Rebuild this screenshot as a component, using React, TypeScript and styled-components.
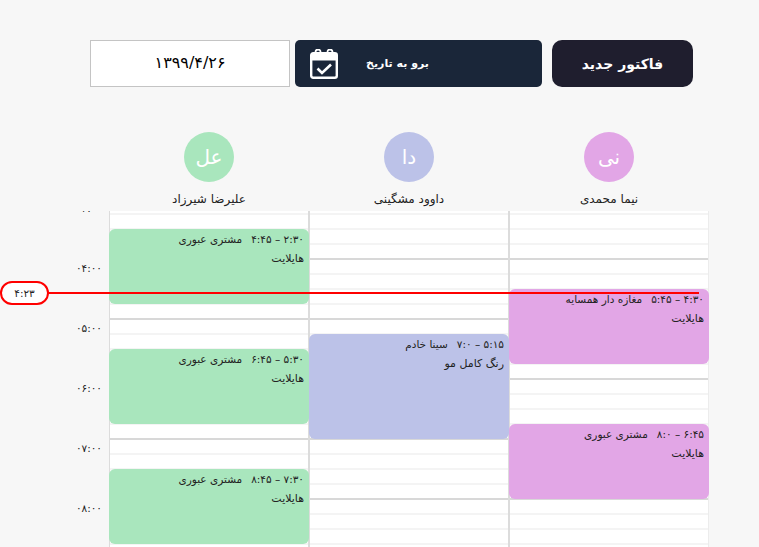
import React from 'react';
import styled, { createGlobalStyle } from 'styled-components';

const Global = createGlobalStyle`
  html, body { margin: 0; padding: 0; height: 100%; background: #f7f7f7; overflow: hidden; }
  body { font-family: "DejaVu Sans", sans-serif; }
`;

const Page = styled.div`
  position: relative;
  width: 759px;
  height: 547px;
  overflow: hidden;
  direction: rtl;
`;

const Toolbar = styled.div`
  display: flex;
  align-items: stretch;
  height: 47px;
  padding: 40px 66px 0 0;
`;

const NewButton = styled.button`
  width: 141px;
  border: 0;
  border-radius: 10px;
  background: #1f1e2e;
  color: #fff;
  font: bold 14px "DejaVu Sans", sans-serif;
`;

const DateButton = styled.button`
  display: flex;
  align-items: center;
  justify-content: space-between;
  width: 247px;
  margin-right: 10px;
  padding: 0 113px 0 15px;
  border: 0;
  border-radius: 5px;
  background: #1a2639;
  color: #fff;
  font: bold 11px "DejaVu Sans", sans-serif;
`;

const DateInput = styled.div`
  display: flex;
  align-items: center;
  justify-content: center;
  box-sizing: border-box;
  width: 200px;
  margin-right: 5px;
  padding-bottom: 2px;
  border: 1px solid #c4c4c4;
  background: #fff;
  color: #000;
  font-size: 16px;
`;

const Heads = styled.div`
  display: flex;
  margin: 45px 50px 0 0;
  height: 79px;
`;

const Head = styled.div`
  display: flex;
  flex-direction: column;
  align-items: center;
  width: 200px;
`;

const Avatar = styled.div<{ $color: string }>`
  display: flex;
  align-items: center;
  justify-content: center;
  width: 50px;
  height: 50px;
  border-radius: 50%;
  background: ${p => p.$color};
  color: #fff;
  font-size: 20px;
`;

const Name = styled.div`
  margin-top: 8px;
  color: #222;
  font-size: 12px;
  line-height: 18px;
`;

const Board = styled.div`
  display: flex;
  height: 336px;
  margin-right: 50px;
  overflow: hidden;
`;

const Column = styled.div`
  position: relative;
  box-sizing: border-box;
  width: 200px;
  margin-top: -11px;
  background: #fff;
  border-left: 1px solid #dcdcdc;
  border-right: 1px solid #dcdcdc;
  &:first-child { border-right-color: #ececec; }
`;

const Slot = styled.div<{ $hour: boolean }>`
  box-sizing: border-box;
  height: 15px;
  border-bottom: 2px solid ${p => (p.$hour ? '#d8d8d8' : '#f4f4f4')};
`;

const Event = styled.div<{ $color: string; $top: number; $height: number }>`
  position: absolute;
  top: ${p => p.$top}px;
  left: -1px;
  right: -1px;
  height: ${p => p.$height}px;
  box-sizing: border-box;
  padding: 0 5px;
  border-radius: 6px;
  background: ${p => p.$color};
  color: #222;
  font-size: 10.5px;
`;

const EventHead = styled.div`
  display: flex;
  gap: 9px;
  height: 20px;
  line-height: 20px;
`;

const EventNote = styled.div`
  font-size: 11px;
  line-height: 20px;
`;

const Axis = styled.div`
  width: 109px;
  margin-top: -13px;
`;

const AxisLabel = styled.div`
  box-sizing: border-box;
  height: 60px;
  padding: 3px 7px 0 0;
  direction: ltr;
  text-align: right;
  color: #222;
  font-size: 10.5px;
  line-height: 14px;
`;

const NowLine = styled.div`
  position: absolute;
  top: 292px;
  left: 47px;
  width: 652px;
  height: 2px;
  background: #f00;
`;

const NowPill = styled.div`
  position: absolute;
  top: 281px;
  left: 0;
  display: flex;
  align-items: center;
  justify-content: center;
  box-sizing: border-box;
  width: 49px;
  height: 24px;
  border: 2px solid #f00;
  border-radius: 12px;
  background: #fff;
  color: #222;
  font-size: 10.5px;
`;

const CalendarIcon = () => (
  <svg width="28" height="30" viewBox="0 0 28 30" fill="none">
    <rect x="1.2" y="4.2" width="25.6" height="24.6" rx="2" stroke="#fff" strokeWidth="2.4" />
    <path d="M1 5h26v6.5H1z" fill="#fff" />
    <path d="M5.5 5V3a2.5 2.5 0 0 1 5 0v2M17.5 5V3a2.5 2.5 0 0 1 5 0v2" stroke="#fff" strokeWidth="1.8" />
    <path d="M7.5 19.5l4.5 4.5L21 15.5" stroke="#fff" strokeWidth="2.6" />
  </svg>
);

type Booking = { top: number; height: number; time: string; who: string; what: string };
type Staff = { name: string; short: string; color: string; bookings: Booking[] };

const staff: Staff[] = [
  {
    name: 'نیما محمدی', short: 'نی', color: '#e2a6e6',
    bookings: [
      { top: 88.5, height: 75, time: '۴:۳۰ – ۵:۴۵', who: 'مغازه دار همسایه', what: 'هایلایت' },
      { top: 223.5, height: 75, time: '۶:۴۵ – ۸:۰', who: 'مشتری عبوری', what: 'هایلایت' },
    ],
  },
  {
    name: 'داوود مشگینی', short: 'دا', color: '#bcc2e8',
    bookings: [{ top: 133.5, height: 105, time: '۵:۱۵ – ۷:۰', who: 'سینا خادم', what: 'رنگ کامل مو' }],
  },
  {
    name: 'علیرضا شیرزاد', short: 'عل', color: '#a9e6bd',
    bookings: [
      { top: 28.5, height: 75, time: '۲:۳۰ – ۴:۴۵', who: 'مشتری عبوری', what: 'هایلایت' },
      { top: 148.5, height: 75, time: '۵:۳۰ – ۶:۴۵', who: 'مشتری عبوری', what: 'هایلایت' },
      { top: 268.5, height: 75, time: '۷:۳۰ – ۸:۴۵', who: 'مشتری عبوری', what: 'هایلایت' },
    ],
  },
];

const hours = ['۰۳', '۰۴', '۰۵', '۰۶', '۰۷', '۰۸'];
const slots = Array.from({ length: 24 }, (_, i) => i);

export default function App() {
  return (
    <Page>
      <Global />
      <Toolbar>
        <NewButton>فاکتور جدید</NewButton>
        <DateButton>
          <span>برو به تاریخ</span>
          <CalendarIcon />
        </DateButton>
        <DateInput>۱۳۹۹/۴/۲۶</DateInput>
      </Toolbar>
      <Heads>
        {staff.map(s => (
          <Head key={s.name}>
            <Avatar $color={s.color}>{s.short}</Avatar>
            <Name>{s.name}</Name>
          </Head>
        ))}
      </Heads>
      <Board>
        {staff.map(s => (
          <Column key={s.name}>
            {slots.map(i => (
              <Slot key={i} $hour={i % 4 === 3} />
            ))}
            {s.bookings.map(b => (
              <Event key={b.top} $color={s.color} $top={b.top} $height={b.height}>
                <EventHead>
                  <span>{b.time}</span>
                  <span>{b.who}</span>
                </EventHead>
                <EventNote>{b.what}</EventNote>
              </Event>
            ))}
          </Column>
        ))}
        <Axis>
          {hours.map(h => (
            <AxisLabel key={h}>{h}:۰۰</AxisLabel>
          ))}
        </Axis>
      </Board>
      <NowLine />
      <NowPill>۴:۲۳</NowPill>
    </Page>
  );
}
